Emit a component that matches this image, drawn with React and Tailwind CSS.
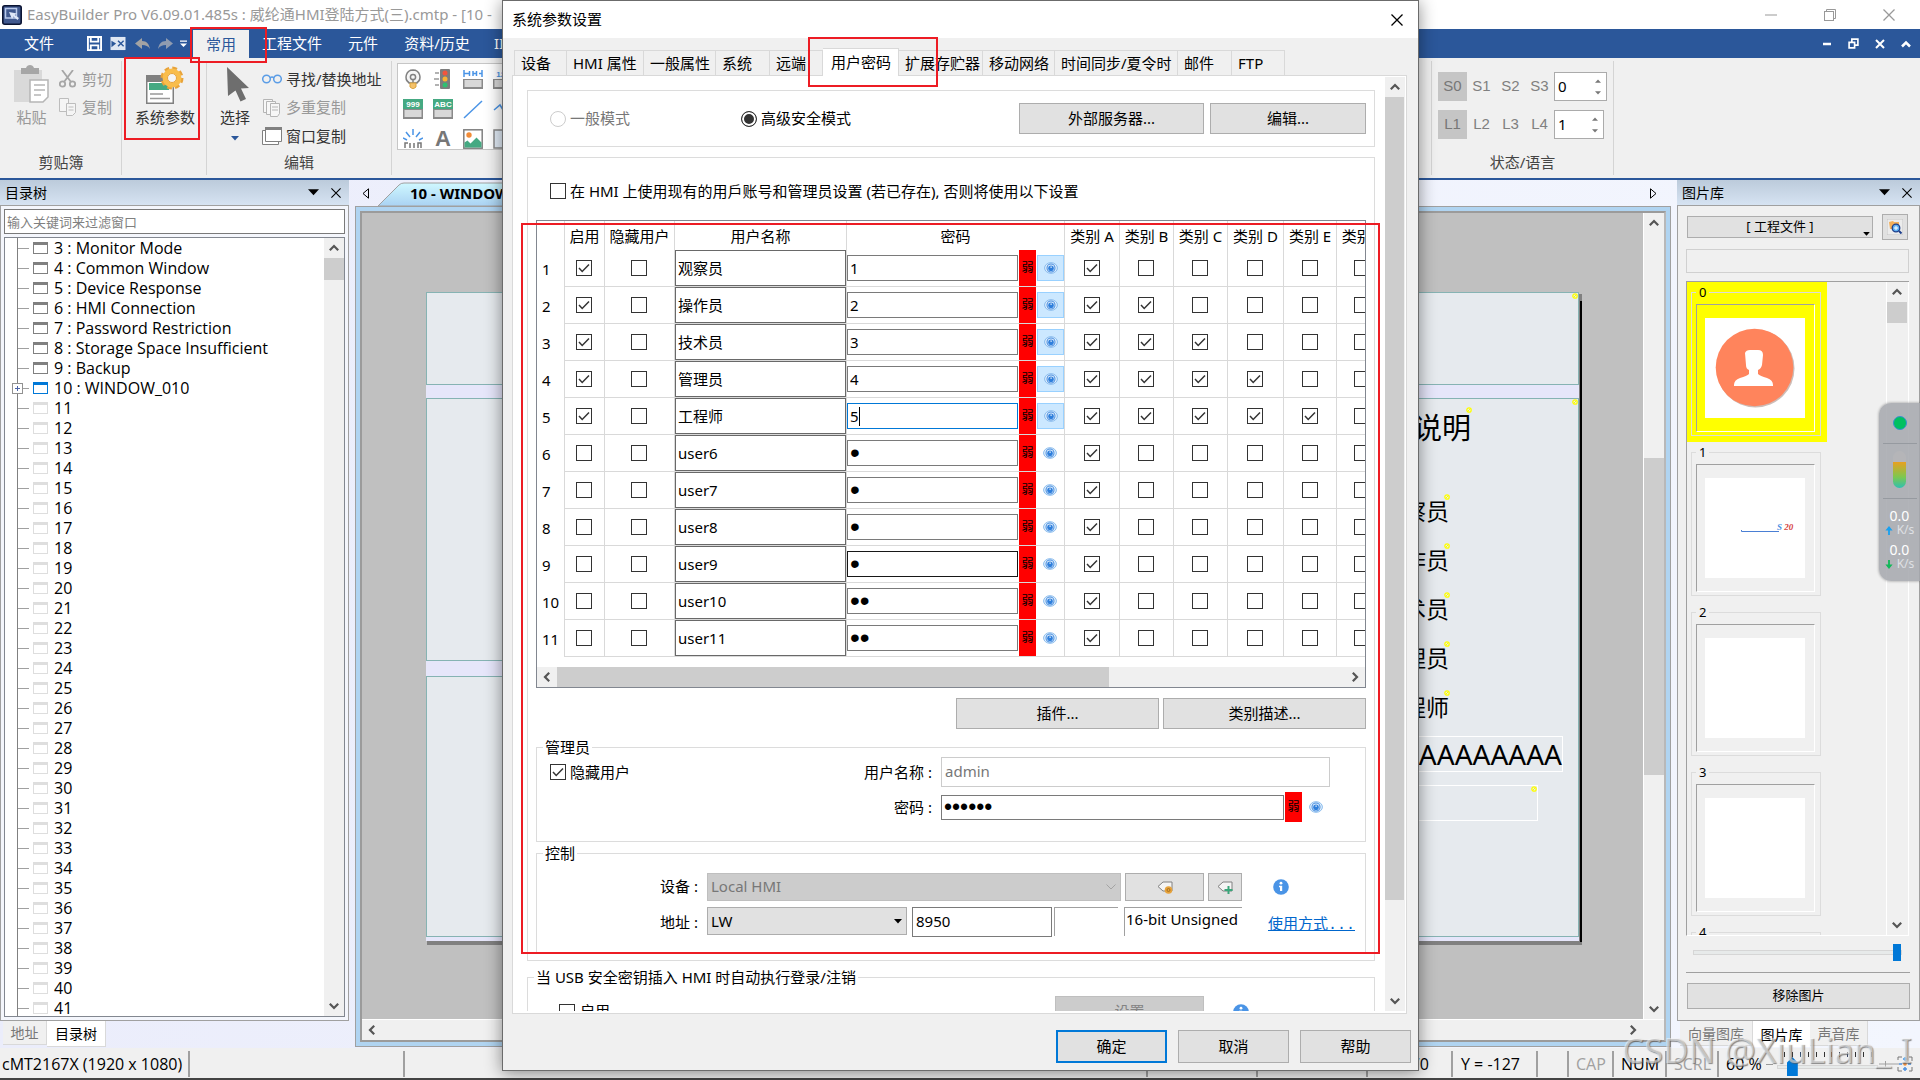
import React from 'react'
import clsx from 'clsx'

const users = [
  { name: '观察员', pass: '1', level: 1, shown: true },
  { name: '操作员', pass: '2', level: 2, shown: true },
  { name: '技术员', pass: '3', level: 3, shown: true },
  { name: '管理员', pass: '4', level: 4, shown: true },
  { name: '工程师', pass: '5', level: 5, shown: true },
  { name: 'user6', pass: '6', level: 1 },
  { name: 'user7', pass: '7', level: 1 },
  { name: 'user8', pass: '8', level: 1 },
  { name: 'user9', pass: '9', level: 1 },
  { name: 'user10', pass: '10', level: 1 },
  { name: 'user11', pass: '11', level: 1 },
]

const categories = ['A', 'B', 'C', 'D', 'E', 'F']

const dialogTabs = [
  { label: '设备', width: 'w-[53px]' },
  { label: 'HMI 属性', width: 'w-[77px]' },
  { label: '一般属性', width: 'w-[72px]' },
  { label: '系统', width: 'w-[54px]' },
  { label: '远端', width: 'w-[53px]' },
  { label: '用户密码', width: 'w-[76px]', active: true },
  { label: '扩展存贮器', width: 'w-[84px]' },
  { label: '移动网络', width: 'w-[72px]' },
  { label: '时间同步/夏令时', width: 'w-[123px]' },
  { label: '邮件', width: 'w-[54px]' },
  { label: 'FTP', width: 'w-[53px]' },
]

const windowNames = {
  3: 'Monitor Mode',
  4: 'Common Window',
  5: 'Device Response',
  6: 'HMI Connection',
  7: 'Password Restriction',
  8: 'Storage Space Insufficient',
  9: 'Backup',
  10: 'WINDOW_010',
}

const treeRows = Array.from({ length: 39 }, (_, i) => ({ id: i + 3, name: windowNames[i + 3] }))

const rotation = { up: '', right: 'rotate-90', down: 'rotate-180', left: '-rotate-90' }

function Arrow({ dir }) {
  return (
    <svg viewBox="0 0 10 10" className={clsx('w-[10px] h-[10px] shrink-0', rotation[dir])}>
      <path d="M0.8 7.2 5 3l4.200 4.200" fill="none" stroke="#555" strokeWidth="2.200" />
    </svg>
  )
}

function ScrollButton({ dir, className }) {
  return (
    <button aria-label={`scroll ${dir}`} className={clsx('flex items-center justify-center shrink-0 w-[20px] h-[20px]', className)}>
      <Arrow dir={dir} />
    </button>
  )
}

function Caret({ className }) {
  return (
    <svg viewBox="0 0 10 6" className={className}>
      <path d="M0 0h10L5 5.500z" fill="currentColor" />
    </svg>
  )
}

function Cross({ className, size = 10 }) {
  return (
    <svg viewBox="0 0 12 12" width={size} height={size} className={className}>
      <path d="M0.500 0.500l11 11M11.500 0.500l-11 11" fill="none" stroke="currentColor" strokeWidth="1.300" />
    </svg>
  )
}

function Check({ id, label, checked }) {
  return (
    <span className="relative inline-block w-[16px] h-[16px] shrink-0 align-middle">
      <input
        id={id}
        type="checkbox"
        aria-label={label}
        defaultChecked={checked}
        className="peer block w-[16px] h-[16px] appearance-none border border-[#333] bg-white"
      />
      <svg viewBox="0 0 16 16" className="absolute inset-0 hidden peer-checked:block pointer-events-none">
        <path d="M3 8l3.200 3.500L13 4.500" fill="none" stroke="#333" strokeWidth="1.500" />
      </svg>
    </span>
  )
}

function Eye() {
  return (
    <svg viewBox="0 0 14 12" className="w-[14px] h-[12px]">
      <ellipse cx="7" cy="6" rx="6.400" ry="5.300" fill="#e3f0fc" stroke="#7db3ea" strokeWidth="0.900" />
      <circle cx="7" cy="6" r="4" fill="none" stroke="#4a90e2" strokeWidth="1.100" />
      <circle cx="7" cy="6.300" r="2.800" fill="#2f7fdc" />
      <rect x="6.500" y="4.500" width="1.200" height="1.300" fill="#fff" />
    </svg>
  )
}

function Info() {
  return (
    <svg viewBox="0 0 16 16" className="w-[16px] h-[16px] shrink-0">
      <circle cx="8" cy="8" r="7.800" fill="#4a94e6" />
      <circle cx="8" cy="4.200" r="1.400" fill="#fff" />
      <path d="M6 6.800h3.200v5.200h-2.200v-3.700H6z" fill="#fff" />
    </svg>
  )
}

function Button({ children, className }) {
  return (
    <button className={clsx('flex items-center justify-center bg-[#e1e1e1] border border-[#adadad] shrink-0', className)}>
      {children}
    </button>
  )
}

function Weak({ className }) {
  return (
    <span className={clsx('flex items-center justify-center w-[17px] bg-[#ff0000] text-[12px] shrink-0', className)}>弱</span>
  )
}

/* ---------- title and menu bars ---------- */

function TitleBar() {
  return (
    <div className="flex items-center h-[29px] pl-[2px] bg-white text-[#999] shrink-0">
      <svg viewBox="0 0 20 20" className="w-[20px] h-[20px] mr-[5px] shrink-0">
        <rect x="0.800" y="0.800" width="18.400" height="18.400" rx="2" fill="#41598f" stroke="#0b1433" strokeWidth="1.600" />
        <rect x="3.500" y="3.500" width="11" height="9.500" fill="none" stroke="#b9c9ea" strokeWidth="1.500" />
        <path d="M7 7l3 7 1.500-2.500 4 3.500 1.500-2-4.200-3L15 8.500z" fill="#dfe7f7" />
      </svg>
      <span className="text-[15px] whitespace-nowrap flex-1">
        EasyBuilder Pro V6.09.01.485s : 威纶通HMI登陆方式(三).cmtp - [10 -
      </span>
      <button aria-label="Minimize" className="flex justify-center w-[58px]">
        <svg viewBox="0 0 12 12" className="w-[12px] h-[12px]"><path d="M0 6h12" stroke="currentColor" /></svg>
      </button>
      <button aria-label="Restore" className="flex justify-center w-[59px]">
        <svg viewBox="0 0 12 12" className="w-[12px] h-[12px]" fill="none" stroke="currentColor">
          <rect x="0.500" y="2.500" width="9" height="9" />
          <path d="M2.500 2.500v-2h9v9h-2" />
        </svg>
      </button>
      <button aria-label="Close" className="flex justify-center w-[59px] mr-[2px]"><Cross size={12} /></button>
    </div>
  )
}

function MenuBar() {
  return (
    <div className="flex items-stretch h-[29px] bg-[#2b579a] text-white text-[15px] shrink-0">
      <button className="w-[63px] pl-[15px]">文件</button>
      <div className="flex items-center w-[130px] pl-[24px]">
        <svg viewBox="0 0 16 16" className="w-[15px] h-[15px]" fill="none" stroke="#fff" strokeWidth="2">
          <path d="M1 1h14v14H1zM4 1v5h8V1M4 15v-5h8v5" />
        </svg>
        <svg viewBox="0 0 16 16" className="w-[16px] h-[15px] ml-[8px]">
          <path d="M0 1h16v14H0z" fill="#dfe7f3" />
          <path d="M1 5l5 3-5 4z" fill="#2b579a" />
          <path d="M8 5l6 6M14 5l-6 6" stroke="#2b579a" strokeWidth="1.500" />
        </svg>
        <svg viewBox="0 0 15 12" className="w-[15px] h-[12px] ml-[9px]">
          <path d="M7 0v3c5 0 7 3 8 8-2-3-4-4-8-4v4L0 5.500z" fill="#a3a3a3" />
        </svg>
        <svg viewBox="0 0 15 12" className="w-[15px] h-[12px] ml-[8px] -scale-x-100">
          <path d="M7 0v3c5 0 7 3 8 8-2-3-4-4-8-4v4L0 5.500z" fill="#8f9bb0" />
        </svg>
        <svg viewBox="0 0 8 8" className="w-[7px] h-[8px] ml-[7px]" fill="#fff">
          <path d="M0 0h8v1.500H0zM0 3.500h8L4 7.500z" />
        </svg>
      </div>
      <button className="w-[56px] mt-px bg-[#f0f0f0] text-[#2b579a]">常用</button>
      <button className="w-[86px] whitespace-nowrap">工程文件</button>
      <button className="w-[56px]">元件</button>
      <button className="w-[92px]">资料/历史</button>
      <button className="w-[56px] pl-[11px] text-left">IIoT</button>
      <div className="flex-1" />
      <div className="flex items-center gap-[16px] pr-[9px]">
        <svg viewBox="0 0 10 10" className="w-[10px] h-[10px]"><path d="M1 5h8" stroke="#fff" strokeWidth="2.500" /></svg>
        <svg viewBox="0 0 10 10" className="w-[11px] h-[11px]" fill="none" stroke="#fff" strokeWidth="1.500">
          <path d="M1 4h5v5H1zM3.500 4V1H9v5.500H6" />
        </svg>
        <svg viewBox="0 0 10 10" className="w-[10px] h-[10px]"><path d="M1 1l8 8M9 1L1 9" stroke="#fff" strokeWidth="2" /></svg>
        <svg viewBox="0 0 10 10" className="w-[10px] h-[10px]"><path d="M1 7.500l4-4 4 4" fill="none" stroke="#fff" strokeWidth="2.500" /></svg>
      </div>
    </div>
  )
}

/* ---------- ribbon ---------- */

function Lamp() {
  return (
    <svg viewBox="0 0 20 20" className="w-[20px] h-[20px]">
      <path d="M10 1a7 7 0 0 1 4 12.700V14H6v-.3A7 7 0 0 1 10 1z" fill="#f5f5f5" stroke="#808080" strokeWidth="1.500" />
      <circle cx="10" cy="8" r="2.600" fill="none" stroke="#808080" strokeWidth="1.500" />
      <path d="M10 10v4" stroke="#808080" strokeWidth="1.500" />
      <path d="M7 14h6v4l-3 2-3-2z" fill="#f5c26b" stroke="#d9a33d" />
    </svg>
  )
}

function TrafficLight() {
  return (
    <svg viewBox="0 0 20 20" className="w-[20px] h-[20px]">
      <rect x="7" y="0" width="10" height="20" rx="1" fill="#7d7d7d" />
      <circle cx="12" cy="4" r="2.500" fill="#f2553d" />
      <circle cx="12" cy="10" r="2.500" fill="#f9b233" />
      <circle cx="12" cy="16" r="2.500" fill="#2fbf71" />
      <path d="M2 4h4M1 10h5M2 16h4" stroke="#999" strokeWidth="1.500" />
    </svg>
  )
}

function PanelIcon({ top, text, plain }) {
  return (
    <svg viewBox="0 0 20 20" className="w-[20px] h-[20px]">
      {!plain && <rect width="20" height="11" fill={top} />}
      <rect x="0" y="10" width="20" height="10" fill="#8a8a8a" />
      <rect x="1.500" y="11" width="17" height="7" fill="#d8d8d8" />
      <text x="10" y="8" textAnchor="middle" fontSize="8" fontWeight="700" fill={plain ? '#4a94e6' : '#fff'} fontFamily="Liberation Sans">
        {text}
      </text>
    </svg>
  )
}

function ScaleIcon() {
  return (
    <svg viewBox="0 0 20 20" className="w-[20px] h-[20px]">
      <rect x="0" y="10" width="20" height="10" fill="#8a8a8a" />
      <rect x="1.500" y="11" width="17" height="7" fill="#d8d8d8" />
      <path d="M1 1v7M6.500 2v5M10 2v5M13.500 2v5M19 1v7M1 4.500h5.500M10 4.500h3.500M16 4.500h3" fill="none" stroke="#4a94e6" strokeWidth="1.500" />
    </svg>
  )
}

function Gallery() {
  return (
    <div className="grid grid-cols-[repeat(4,30px)] auto-rows-[30px] content-start overflow-hidden h-[87px] pl-[5px] pt-[5px] bg-white border border-[#c6c6c6]">
      <Lamp />
      <TrafficLight />
      <ScaleIcon />
      <PanelIcon plain text="123" />
      <PanelIcon top="#45a982" text="999" />
      <PanelIcon top="#45a982" text="ABC" />
      <svg viewBox="0 0 20 20" className="w-[20px] h-[20px]"><path d="M1 19L19 2" stroke="#4a94e6" strokeWidth="1.500" /></svg>
      <svg viewBox="0 0 20 20" className="w-[20px] h-[20px]"><path d="M1 11l6-5 5 8 6-9" fill="none" stroke="#4a94e6" strokeWidth="1.500" /></svg>
      <svg viewBox="0 0 20 20" className="w-[20px] h-[20px]">
        <path d="M10 0v6M3 3l4 5M17 3l-4 5M0 9l4 2M20 9l-4 2" stroke="#4a94e6" strokeWidth="1.500" />
        <path d="M2 19v-5h3M7 19v-5M11 19v-5M15 19v-5h3v5" fill="none" stroke="#777" strokeWidth="1.500" />
      </svg>
      <span className="w-[20px] text-center text-[22px] leading-[20px] text-[#777] font-['Liberation_Sans',sans-serif] font-bold">A</span>
      <svg viewBox="0 0 20 20" className="w-[20px] h-[20px]">
        <rect x="0.800" y="0.800" width="18.400" height="18.400" fill="#fff" stroke="#808080" strokeWidth="1.500" />
        <circle cx="6" cy="6" r="2.700" fill="#f28c38" />
        <path d="M1.500 18.500v-5l3-2 3 3 6-6 5 5v5z" fill="#45a982" />
      </svg>
      <svg viewBox="0 0 20 20" className="w-[20px] h-[20px]"><rect x="1" y="1" width="18" height="18" fill="#e3edf8" stroke="#888" strokeWidth="1.500" /></svg>
    </div>
  )
}

function RibbonGroup({ caption, className, children }) {
  return (
    <div className={clsx('flex flex-col shrink-0 mt-[3px] mb-[3px] border-r border-[#d4d4d4]', className)}>
      <div className="h-[89px]">{children}</div>
      <div className="text-center leading-[24px] text-[#444]">{caption}</div>
    </div>
  )
}

function StateRow({ labels, value, width }) {
  return (
    <div className="flex h-[29px]">
      {labels.map((l, i) => (
        <button key={l} className={clsx("w-[29px] text-[15px] font-['Liberation_Sans',sans-serif]", i === 0 ? 'bg-[#c5c5c5] text-[#777]' : 'text-[#808080]')}>
          {l}
        </button>
      ))}
      <div className={clsx('flex items-center bg-white border border-[#ababab] pr-[5px]', width)}>
        <input aria-label={`${labels[0]} value`} defaultValue={value} className="flex-1 min-w-0 pl-[3px] text-black" />
        <div className="flex flex-col gap-[8px] text-[#777]">
          <Caret className="w-[6px] h-[4px] rotate-180" />
          <Caret className="w-[6px] h-[4px]" />
        </div>
      </div>
    </div>
  )
}

function Ribbon() {
  return (
    <div className="flex h-[122px] bg-[#f0f0f0] border-b-2 border-[#2b579a] text-[15px] text-[#333] shrink-0">
      <RibbonGroup caption="剪贴簿" className="w-[122px] pl-px">
        <div className="flex pt-[4px]">
          <button className="flex flex-col items-center w-[58px] pl-[3px] text-[#999]">
            <svg viewBox="0 0 36 38" className="w-[36px] h-[38px]">
              <path d="M0 5h28v32H0z" fill="#d9d9d9" />
              <path d="M7 3h5c1-4 7-4 8 0h5v6H7z" fill="#a6a6a6" />
              <path d="M16 15h18v17l-5 5H16z" fill="#fff" stroke="#b5b5b5" strokeWidth="1.500" />
              <path d="M20 20h11M20 25h11M20 30h7" stroke="#b5b5b5" strokeWidth="1.500" />
            </svg>
            <span className="leading-[28px]">粘贴</span>
          </button>
          <div className="flex flex-col text-[#999]">
            <button className="flex items-center gap-[6px] h-[28px]">
              <svg viewBox="0 0 17 18" className="w-[17px] h-[18px]" fill="none" stroke="#a6a6a6" strokeWidth="1.800">
                <path d="M3 0l9 12M14 0L5 12" />
                <circle cx="3.500" cy="14" r="2.700" />
                <circle cx="13.500" cy="14" r="2.700" />
              </svg>
              剪切
            </button>
            <button className="flex items-center gap-[6px] h-[28px]">
              <svg viewBox="0 0 17 18" className="w-[17px] h-[18px]" fill="#f5f5f5" stroke="#bdbdbd">
                <path d="M0.500 0.500h9v13h-9z" />
                <path d="M7.500 5.500h9v9l-3 3h-6z" />
                <path d="M9.500 9h5M9.500 12h5" />
              </svg>
              复制
            </button>
          </div>
        </div>
      </RibbonGroup>
      <RibbonGroup caption="" className="w-[85px]">
        <button className="flex flex-col items-center w-full pt-[5px] pl-[2px]">
          <svg viewBox="0 0 38 38" className="w-[38px] h-[38px]">
            <rect x="0" y="9" width="28" height="29" fill="#808080" />
            <rect x="1.500" y="16" width="25" height="20.500" fill="#fff" />
            <rect x="3" y="17" width="20" height="7" fill="#45a982" />
            <path d="M4 28h13M4 32.500h20" stroke="#999" strokeWidth="1.500" />
            <circle cx="26" cy="12" r="9.500" fill="none" stroke="#e8a33a" strokeWidth="4" strokeDasharray="4.500 2.960" />
            <circle cx="26" cy="12" r="7" fill="#f2f2f2" stroke="#f9bd4b" strokeWidth="5" />
            <circle cx="26" cy="12" r="4.500" fill="#f5f5f5" stroke="#e8a33a" />
          </svg>
          <span className="leading-[26px]">系统参数</span>
        </button>
      </RibbonGroup>
      <RibbonGroup caption="编辑" className="w-[185px]">
        <div className="flex pt-[4px]">
          <button className="flex flex-col items-center w-[54px] ml-[1px]">
            <svg viewBox="0 0 23 36" className="w-[23px] h-[36px] mt-[2px] ml-[6px]">
              <path d="M0 0l22 21-8 .5 5 10.500-5.500 2.500-5-11L1 29z" fill="#6e6e6e" />
            </svg>
            <span className="leading-[28px]">选择</span>
            <Caret className="w-[8px] h-[5px] mt-[5px] text-[#2b579a]" />
          </button>
          <div className="flex flex-col">
            <button className="flex items-center gap-[4px] h-[28px]">
              <svg viewBox="0 0 20 18" className="w-[20px] h-[18px]" fill="none" stroke="#5b9de6" strokeWidth="1.500">
                <circle cx="4.500" cy="9" r="3.800" />
                <circle cx="15.500" cy="9" r="3.800" />
                <path d="M8 8q2-2 4 0" />
              </svg>
              寻找/替换地址
            </button>
            <button className="flex items-center gap-[4px] h-[29px] text-[#999]">
              <svg viewBox="0 0 20 18" className="w-[20px] h-[18px]" fill="#f7f7f7" stroke="#b5b5b5">
                <path d="M1.500 0.500h9v13h-9z" />
                <path d="M4.500 2.500h9v13h-9z" />
                <path d="M8.500 4.500h9v10l-2 3h-7zM10 8h6M10 11h6" />
              </svg>
              多重复制
            </button>
            <button className="flex items-center gap-[4px] h-[28px]">
              <svg viewBox="0 0 20 18" className="w-[20px] h-[18px]" fill="#fff" stroke="#808080">
                <path d="M0.500 3.500h16v14h-16z" />
                <path d="M3.500 1.500h16v13h-16z" />
                <path d="M3 1.500h17" strokeWidth="3" />
              </svg>
              窗口复制
            </button>
          </div>
        </div>
      </RibbonGroup>
      <div className="flex-1 min-w-0 mt-[3px] mb-[3px] pl-[5px] pr-[30px] pt-[2px] border-r border-[#d4d4d4]">
        <Gallery />
      </div>
      <RibbonGroup caption="状态/语言" className="w-[182px]">
        <div className="flex flex-col gap-[9px] pl-[6px] pt-[11px]">
          <StateRow labels={['S0', 'S1', 'S2', 'S3']} value="0" width="w-[53px]" />
          <StateRow labels={['L1', 'L2', 'L3', 'L4']} value="1" width="w-[50px]" />
        </div>
      </RibbonGroup>
      <div className="w-[306px] shrink-0" />
    </div>
  )
}

/* ---------- docks ---------- */

function DockHeader({ title }) {
  return (
    <div className="flex items-center h-[25px] pl-[5px] pr-[8px] bg-linear-to-b from-[#bccbdb] to-[#d6e3f2] text-[14px] shrink-0">
      <span className="flex-1">{title}</span>
      <button aria-label="Menu"><Caret className="w-[11px] h-[7px] mr-[12px]" /></button>
      <button aria-label="Close panel"><Cross size={10} /></button>
    </div>
  )
}

function WindowTree() {
  return (
    <aside className="flex flex-col w-[349px] shrink-0">
      <DockHeader title="目录树" />
      <div className="flex flex-col flex-1 min-h-0 gap-[3px] p-[3px] border border-[#a0a0a0] bg-[#f4f6fc]">
        <input
          aria-label="filter"
          placeholder="输入关键词来过滤窗口"
          className="w-full h-[25px] px-[2px] bg-white border border-[#7a7a7a] text-[13px] placeholder:text-[#808080] shrink-0"
        />
        <div className="flex flex-1 min-h-0 bg-white border border-[#828790]">
          <ul className="flex-1 overflow-hidden pl-[12px] text-[16px] font-['Open_Sans',sans-serif]">
            {treeRows.map((row) => (
              <li key={row.id} className="relative flex items-center h-[20px] border-l border-[#808080] whitespace-nowrap">
                <span className="w-[11px] h-px bg-[#a0a0a0] mr-[4px] shrink-0" />
                {row.id === 10 && (
                  <span className="absolute -left-[6px] w-[11px] h-[11px] bg-white border border-[#919191]">
                    <svg viewBox="0 0 9 9" className="w-[9px] h-[9px]"><path d="M2 4.500h5M4.500 2v5" stroke="#4b63a7" /></svg>
                  </span>
                )}
                <span
                  className={clsx(
                    'w-[15px] h-[12px] border border-t-[3px] mr-[6px] shrink-0',
                    row.id < 10 ? 'border-[#808080]' : row.id === 10 ? 'border-[#0078d7]' : 'border-[#dedede]'
                  )}
                />
                {row.name ? `${row.id} : ${row.name}` : row.id}
              </li>
            ))}
          </ul>
          <div className="flex flex-col w-[20px] bg-[#f0f0f0]">
            <ScrollButton dir="up" />
            <div className="h-[22px] bg-[#cdcdcd]" />
            <div className="flex-1" />
            <ScrollButton dir="down" />
          </div>
        </div>
      </div>
      <div className="flex items-start h-[27px] pl-[3px] text-[14px] shrink-0">
        <button className="w-[44px] h-[24px] bg-[#f0f0f0] border-b border-r border-[#d9d9d9] text-[#777]">地址</button>
        <button className="w-[59px] h-[26px] bg-white border-b border-r border-[#d9d9d9]">目录树</button>
      </div>
    </aside>
  )
}

function Marker({ className }) {
  return (
    <svg viewBox="0 0 6 6" className={clsx('absolute w-[6px] h-[6px]', className)}>
      <circle cx="3" cy="3" r="2.200" fill="none" stroke="#ff0" strokeWidth="1.300" />
      <path d="M2 4l2-2" stroke="#ff0" />
    </svg>
  )
}

function HmiPage() {
  return (
    <div className="absolute left-[64px] right-[64px] top-[79px] bottom-[78px] bg-[#e6e6fa] border-t border-[#86b3b3] shadow-[2px_3px_0_1px_#808080]">
      <div className="absolute inset-x-0 top-0 h-[92px] bg-[#e6eaee] border border-t-0 border-[#86b3b3]"><Marker className="right-0 top-0" /></div>
      <div className="absolute left-0 w-1/2 top-[105px] h-[263px] bg-[#e6eaee] border border-[#86b3b3]" />
      <div className="absolute left-0 w-1/2 top-[383px] bottom-[4px] bg-[#e6eaee] border border-[#86b3b3]" />
      <div className="absolute left-1/2 right-0 top-[105px] bottom-[4px] bg-[#e6eaee] border border-[#86b3b3]">
        <Marker className="right-0 top-0" />
        <div className="absolute right-[107px] top-[8px] text-[29px] leading-[42px]">
          说明<Marker className="-right-px top-0" />
        </div>
        {users.slice(0, 5).map((u, i) => (
          <div key={u.name} className="absolute right-[129px] text-[23px] leading-[34px]" style={{ top: 95 + i * 49 }}>
            {u.name}<Marker className="-right-px top-0" />
          </div>
        ))}
        <div className="absolute right-[15px] top-[337px] w-[300px] h-[36px] border border-white text-right text-[28px] leading-[34px]">
          AAAAAAAAA
        </div>
        <div className="absolute right-[40px] top-[386px] w-[300px] h-[36px] border border-white"><Marker className="right-0 top-0" /></div>
      </div>
      <div className="absolute -right-[3px] top-[8px] -bottom-px w-[2px] bg-black" />
    </div>
  )
}

function Editor() {
  return (
    <main className="flex flex-col flex-1 min-w-0 pb-[1px]">
      <div className="flex items-center h-[26px] pl-[13px] pr-[20px] shrink-0">
        <svg viewBox="0 0 7 11" className="w-[7px] h-[11px]"><path d="M6.500 0.800v9.400L1 5.500z" fill="none" stroke="#000" /></svg>
        <div className="relative flex items-center h-full ml-[9px] w-[300px]">
          <svg viewBox="0 0 300 26" className="absolute inset-0 w-[300px] h-[26px]">
            <defs>
              <linearGradient id="tabFill" x1="0" y1="0" x2="0" y2="1">
                <stop offset="0" stopColor="#cff8ff" />
                <stop offset="1" stopColor="#aad2f3" />
              </linearGradient>
            </defs>
            <path d="M0 26L21 5q2-2 5-2h274v23z" fill="url(#tabFill)" stroke="#a0a0a0" />
          </svg>
          <span className="relative pl-[32px] text-[15px] font-bold">10 - WINDOW_010</span>
        </div>
        <div className="flex-1" />
        <svg viewBox="0 0 7 11" className="w-[7px] h-[11px]"><path d="M0.500 0.800v9.400L6 5.500z" fill="none" stroke="#000" /></svg>
      </div>
      <div className="flex flex-1 min-h-0 mx-[6px] border border-[#a0a0a0] bg-[#b0d4f1] p-[4px]">
        <div className="flex flex-col flex-1 min-w-0 border-2 border-[#9b9b9b] border-r-[#b8b8b8]">
          <div className="flex flex-1 min-h-0">
            <div className="relative flex-1 min-w-0 overflow-hidden bg-[#c0c0c0]">
              <HmiPage />
            </div>
            <div className="flex flex-col w-[21px] bg-[#f0f0f0] border-l border-white">
              <ScrollButton dir="up" />
              <div className="flex-[226_1_0]" />
              <div className="flex-[317_1_0] bg-[#cdcdcd]" />
              <div className="flex-[225_1_0]" />
              <ScrollButton dir="down" />
            </div>
          </div>
          <div className="flex items-center justify-between h-[21px] pr-[21px] bg-[#f0f0f0] border-t border-white shrink-0">
            <ScrollButton dir="left" />
            <ScrollButton dir="right" />
          </div>
        </div>
      </div>
    </main>
  )
}

function Thumb({ index }) {
  return (
    <div className={clsx('w-[140px] h-[160px] pl-[4px] shrink-0', index === 0 && 'bg-[#ff0]')}>
      <fieldset className="w-[130px] h-[154px] border border-[#dcdcdc] pl-[4px]">
        <legend className="px-[3px] text-[13px] leading-[20px]">{index}</legend>
        <div className="flex w-[119px] h-[128px] mt-[2px] p-[8px] pt-[13px] border border-t-[#a0a0a0] border-l-[#a0a0a0] border-b-white border-r-white">
          <div className="w-[100px] h-[100px] bg-white">
            {index === 0 && (
              <svg viewBox="0 0 100 100" className="w-[100px] h-[100px]">
                <circle cx="50.500" cy="50.500" r="39" fill="#cdbdb8" />
                <circle cx="49.500" cy="49.500" r="38.800" fill="#ff845c" />
                <path d="M40 35q1-3 5-3h8q5 0 5 5l-1 10q-1 4-4 5v4q2 2 9 4 6 2 6 7v1H29v-1q0-5 6-7 7-2 9-4v-4q-3-1-3-5z" fill="#fff" />
              </svg>
            )}
            {index === 1 && (
              <svg viewBox="0 0 100 100" className="w-[100px] h-[100px]">
                <path d="M36.500 52v1.500H74" fill="none" stroke="#4a7fd4" />
                <text x="72" y="52" fontSize="9" fontStyle="italic" fontWeight="700" fontFamily="Liberation Serif" fill="#d64541">
                  <tspan fill="#4a90e2">S</tspan> 20
                </text>
              </svg>
            )}
          </div>
        </div>
      </fieldset>
    </div>
  )
}

function PictureLibrary() {
  return (
    <aside className="flex flex-col w-[243px] shrink-0">
      <DockHeader title="图片库" />
      <div className="flex flex-col flex-1 min-h-0 pt-[8px] pl-[8px] pr-[9px] pb-[11px] border border-[#a0a0a0] bg-[#f0f0f0]">
        <div className="flex items-center justify-between h-[26px] pl-px shrink-0">
          <div className="relative">
            <select aria-label="library" className="block w-[186px] h-[22px] appearance-none bg-[#e1e1e1] border border-[#adadad] text-[13px] [text-align-last:center]">
              <option>[ 工程文件 ]</option>
            </select>
            <Caret className="absolute right-[3px] bottom-[2px] w-[7px] h-[4px] pointer-events-none" />
          </div>
          <Button className="w-[26px] h-[26px] mr-[2px]">
            <svg viewBox="0 0 16 16" className="w-[16px] h-[16px]">
              <rect width="16" height="16" fill="#ececec" stroke="#c5c5c5" />
              <path d="M2 3l4-1 1 1h5v7H3z" fill="#f3b05a" />
              <circle cx="9" cy="9" r="3.800" fill="#5fb2f5" stroke="#1e3f8c" strokeWidth="1.300" />
              <path d="M7 9h4M9 7v4" stroke="#fff" />
              <path d="M12 12l2.500 2.500" stroke="#1e3f8c" strokeWidth="2" />
            </svg>
          </Button>
        </div>
        <div className="h-[24px] mt-[9px] mr-px border border-[#d0d0d0] shrink-0" />
        <div className="flex flex-1 min-h-0 mt-[8px] mr-px border-t border-l border-[#a0a0a0] border-b border-b-white">
          <div className="flex-1 overflow-hidden">
            {[0, 1, 2, 3, 4].map((i) => <Thumb key={i} index={i} />)}
          </div>
          <div className="flex flex-col w-[23px] pr-px border-x border-white">
            <ScrollButton dir="up" />
            <div className="h-[21px] bg-[#cdcdcd]" />
            <div className="flex-1" />
            <ScrollButton dir="down" />
          </div>
        </div>
        <input
          type="range"
          aria-label="zoom"
          defaultValue="100"
          className="h-[17px] mt-[8px] ml-[7px] mr-[8px] appearance-none bg-transparent shrink-0 [&::-webkit-slider-runnable-track]:h-[5px] [&::-webkit-slider-runnable-track]:bg-[#e7eaea] [&::-webkit-slider-runnable-track]:border [&::-webkit-slider-runnable-track]:border-[#d6d6d6] [&::-webkit-slider-thumb]:appearance-none [&::-webkit-slider-thumb]:w-[8px] [&::-webkit-slider-thumb]:h-[17px] [&::-webkit-slider-thumb]:-mt-[7px] [&::-webkit-slider-thumb]:bg-[#0078d7]"
        />
        <div className="h-px mt-[11px] bg-[#a0a0a0] shrink-0" />
        <Button className="h-[26px] mt-[10px] ml-px text-[13px]">移除图片</Button>
      </div>
      <div className="flex items-start h-[27px] pl-[3px] text-[14px] shrink-0">
        <button className="w-[73px] h-[25px] bg-[#f0f0f0] border-r border-b border-[#d9d9d9] text-[#777]">向量图库</button>
        <button className="w-[57px] h-[26px] bg-white">图片库</button>
        <button className="w-[58px] h-[25px] bg-[#f0f0f0] border-r border-b border-[#d9d9d9] text-[#777]">声音库</button>
      </div>
    </aside>
  )
}

/* ---------- dialog ---------- */

function UserTable() {
  const head = 'font-normal border-r border-[#d9d9d9] h-[29px] p-0 pt-[2px] overflow-hidden whitespace-nowrap'
  const cell = 'p-0 border-r border-b border-[#d9d9d9] text-center leading-none'
  return (
    <div className="border border-[#828790]">
      <div className="overflow-hidden">
        <table className="table-fixed w-[852px] border-separate border-spacing-0">
          <colgroup>
            <col className="w-[28px]" /><col className="w-[40px]" /><col className="w-[70px]" /><col className="w-[172px]" /><col className="w-[218px]" />
            <col className="w-[55px]" /><col className="w-[54px]" /><col className="w-[54px]" /><col className="w-[56px]" /><col className="w-[53px]" /><col className="w-[52px]" />
          </colgroup>
          <thead>
            <tr>
              <th className={head} />
              <th className={head}>启用</th>
              <th className={head}>隐藏用户</th>
              <th className={head}>用户名称</th>
              <th className={head}>密码</th>
              {categories.map((c) => <th key={c} className={head}>类别 {c}</th>)}
            </tr>
          </thead>
          <tbody>
            {users.map((u, i) => (
              <tr key={u.name} className="h-[37px]">
                <th className="font-normal text-left pl-[5px] pt-[2px] pb-0 pr-0 border-r border-[#d9d9d9]">{i + 1}</th>
                <td className={clsx(cell, 'pr-px')}><Check label={`启用 ${u.name}`} checked={u.shown} /></td>
                <td className={clsx(cell, 'pr-px')}><Check label={`隐藏用户 ${u.name}`} /></td>
                <td className={cell}>
                  <input aria-label={`用户名称 ${i + 1}`} defaultValue={u.name} className="block w-full h-[36px] pl-[2px] pb-px border border-[#696969]" />
                </td>
                <td className={cell}>
                  <div className="flex items-center h-[36px]">
                    <div className="relative flex-1">
                      <input
                        type={u.shown ? 'text' : 'password'}
                        aria-label={`密码 ${i + 1}`}
                        defaultValue={u.pass}
                        className={clsx(
                          'block w-full h-[26px] pl-[2px] border',
                          i === 4 ? 'border-[#0078d7]' : i === 8 ? 'border-[#171717]' : 'border-[#7a7a7a]',
                          !u.shown && "text-[28px] font-['Liberation_Sans',sans-serif]"
                        )}
                      />
                      {i === 4 && <span className="absolute left-[12px] top-[4px] w-px h-[19px] bg-black" />}
                    </div>
                    <Weak className="h-[36px] ml-[1px]" />
                    <button
                      aria-label={`显示密码 ${i + 1}`}
                      className={clsx('flex items-center justify-center w-[27px] h-[26px] ml-[1px] border', u.shown ? 'bg-[#cce8ff] border-[#99d1ff]' : 'pr-px border-transparent')}
                    >
                      <Eye />
                    </button>
                  </div>
                </td>
                {categories.map((c, k) => (
                  <td key={c} className={clsx(cell, 'pr-px')}><Check label={`类别 ${c} ${u.name}`} checked={k < u.level} /></td>
                ))}
              </tr>
            ))}
          </tbody>
        </table>
      </div>
      <div className="flex h-[20px] mt-[10px] bg-[#f0f0f0]">
        <ScrollButton dir="left" />
        <div className="w-[552px] bg-[#cdcdcd]" />
        <ScrollButton dir="right" className="ml-auto" />
      </div>
    </div>
  )
}

function AdminGroup() {
  return (
    <fieldset className="h-[105px] mt-[8px] border border-[#dcdcdc]">
      <legend className="ml-[6px] px-[2px] leading-[20px]">管理员</legend>
      <div className="grid grid-cols-[1fr_auto_389px] gap-x-[9px] gap-y-[5px] items-center pl-[13px] pr-[35px]">
        <label htmlFor="hideAdmin" className="flex items-center gap-[4px]"><Check id="hideAdmin" checked />隐藏用户</label>
        <label htmlFor="adminName" className="text-right">用户名称 :</label>
        <input id="adminName" disabled defaultValue="admin" className="h-[30px] pl-[3px] pb-[3px] border border-[#ccc] text-[#777] bg-white" />
        <span />
        <label htmlFor="adminPass" className="text-right">密码 :</label>
        <div className="flex items-center h-[30px]">
          <input id="adminPass" type="password" defaultValue="111111" className="w-[343px] h-[25px] pl-[2px] border border-[#7a7a7a] text-[23px] font-['Liberation_Sans',sans-serif] shrink-0" />
          <Weak className="h-[30px] ml-[1px]" />
          <button aria-label="显示密码" className="ml-[7px]"><Eye /></button>
        </div>
      </div>
    </fieldset>
  )
}

function Tag({ children }) {
  return (
    <svg viewBox="0 0 16 16" className="w-[16px] h-[16px]">
      <path d="M15 12V3H6L1 7.500 6 12z" fill="#f4f4f4" stroke="#808080" />
      {children}
    </svg>
  )
}

function ControlGroup() {
  return (
    <fieldset className="h-[111px] mt-[1px] border border-[#dcdcdc]">
      <legend className="ml-[6px] px-[2px] leading-[20px]">控制</legend>
      <div className="flex items-center h-[29px] mt-[9px]">
        <label htmlFor="device" className="w-[161px] text-right mr-[9px]">设备 :</label>
        <div className="relative">
          <select id="device" disabled className="block w-[414px] h-[28px] pl-[3px] appearance-none bg-[#ccc] border border-[#bfbfbf] text-[#777] opacity-100">
            <option>Local HMI</option>
          </select>
          <svg viewBox="0 0 10 6" className="absolute right-[5px] top-[11px] w-[10px] h-[6px] pointer-events-none">
            <path d="M0.500 0.500L5 5l4.500-4.500" fill="none" stroke="#a3a3a3" />
          </svg>
        </div>
        <Button className="w-[79px] h-[28px] ml-[4px]">
          <Tag><circle cx="11.500" cy="11" r="3.800" fill="#e6a23c" /><circle cx="11.500" cy="11" r="1.500" fill="none" stroke="#a9711c" /></Tag>
        </Button>
        <Button className="w-[34px] h-[28px] ml-[4px]">
          <Tag><path d="M11.500 7v8M7.500 11h8" stroke="#3aa67a" strokeWidth="2" /></Tag>
        </Button>
        <span className="ml-[31px]"><Info /></span>
      </div>
      <div className="flex items-start h-[30px] mt-[6px]">
        <label htmlFor="address" className="w-[161px] leading-[30px] text-right mr-[9px]">地址 :</label>
        <div className="relative">
          <select id="address" className="block w-[200px] h-[28px] pl-[3px] appearance-none bg-[#e1e1e1] border border-[#adadad]">
            <option>LW</option>
          </select>
          <Caret className="absolute right-[5px] top-[12px] w-[8px] h-[5px] pointer-events-none" />
        </div>
        <input aria-label="地址值" defaultValue="8950" className="w-[140px] h-[30px] ml-[5px] pl-[3px] pb-[3px] border border-[#7a7a7a]" />
        <div className="w-[64px] h-[29px] ml-[2px] border-t border-l border-[#a0a0a0]" />
        <div className="w-[118px] h-[29px] ml-[6px] pl-px border-t border-l border-[#a0a0a0] leading-[22px] whitespace-nowrap">16-bit Unsigned</div>
        <a href="#usage" className="ml-[26px] leading-[38px] text-[#0066cc] underline font-['Liberation_Mono','Noto_Sans_CJK_SC',monospace]">使用方式...</a>
      </div>
    </fieldset>
  )
}

function SettingsDialog() {
  return (
    <div className="absolute inset-0 flex justify-center pl-px pb-[9px] pointer-events-none">
      <div
        role="dialog"
        aria-label="系统参数设置"
        className="relative flex flex-col w-[917px] text-[15px] bg-[#f0f0f0] border border-[#6b6b6b] shadow-[0_2px_16px_rgba(0,0,0,0.45)] pointer-events-auto"
      >
        <div className="flex items-center h-[37px] pl-[9px] pr-[15px] bg-white shrink-0">
          <span className="flex-1">系统参数设置</span>
          <button aria-label="关闭"><Cross size={12} /></button>
        </div>
        <div role="tablist" className="relative z-10 flex items-end h-[28px] mt-[10px] -mb-px pl-[11px] shrink-0">
          {dialogTabs.map((t) => (
            <button
              key={t.label}
              role="tab"
              aria-selected={!!t.active}
              className={clsx(
                'text-left whitespace-nowrap border-t border-r border-[#d9d9d9] first:border-l shrink-0',
                t.active ? 'h-[28px] pl-[8px] bg-white' : 'h-[26px] pl-[6px] border-b',
                t.width
              )}
            >
              {t.label}
            </button>
          ))}
        </div>
        <div className="flex flex-1 min-h-0 ml-[9px] mr-[11px] pb-[2px] bg-white border border-[#d9d9d9]">
          <div className="flex-1 min-w-0 overflow-hidden pl-[14px] pr-[10px] pt-[14px]">
            <div className="flex items-center h-[57px] pl-[22px] pr-[8px] border border-[#dcdcdc]">
              <label className="flex items-center gap-[4px] w-[191px] text-[#777]">
                <input type="radio" name="mode" disabled className="w-[16px] h-[16px] appearance-none rounded-full border border-[#ccc]" />
                一般模式
              </label>
              <label className="flex items-center gap-[4px] flex-1">
                <input type="radio" name="mode" defaultChecked className="w-[16px] h-[16px] appearance-none rounded-full border border-[#333] bg-[#333] shadow-[inset_0_0_0_2px_#fff]" />
                高级安全模式
              </label>
              <Button className="w-[185px] h-[31px] mr-[6px]">外部服务器...</Button>
              <Button className="w-[156px] h-[31px]">编辑...</Button>
            </div>

            <div className="mt-[10px] pt-[16px] px-[8px] pb-[6px] border border-[#dcdcdc]">
              <label htmlFor="useExisting" className="flex items-center gap-[4px] h-[34px] mb-[12px] pl-[14px] whitespace-nowrap">
                <Check id="useExisting" />在 HMI 上使用现有的用戶账号和管理员设置 (若已存在), 否则将使用以下设置
              </label>
              <UserTable />
              <div className="flex justify-end gap-[4px] mt-[10px]">
                <Button className="w-[203px] h-[31px]">插件...</Button>
                <Button className="w-[203px] h-[31px]">类别描述...</Button>
              </div>
              <AdminGroup />
              <ControlGroup />
            </div>

            <fieldset className="h-[100px] mt-[6px] border border-[#dcdcdc]">
              <legend className="ml-[6px] px-[2px] leading-[20px]">当 USB 安全密钥插入 HMI 时自动执行登录/注销</legend>
              <div className="flex items-center h-[31px] mt-[9px] pl-[31px]">
                <label htmlFor="usb" className="flex items-center gap-[5px] flex-1"><Check id="usb" />启用</label>
                <button disabled className="w-[149px] h-[31px] mr-[29px] bg-[#ccc] border border-[#bfbfbf] text-[#838383]">设置</button>
                <span className="mr-[125px]"><Info /></span>
              </div>
            </fieldset>
          </div>
          <div className="flex flex-col w-[20px] mt-px mr-px bg-[#f0f0f0] shrink-0">
            <ScrollButton dir="up" />
            <div className="flex-[802_1_0] mr-px bg-[#cdcdcd]" />
            <div className="flex-[91_1_0]" />
            <ScrollButton dir="down" />
          </div>
        </div>
        <div className="flex justify-end gap-[11px] pt-[16px] pb-[7px] pr-[7px] shrink-0">
          <button className="w-[111px] h-[33px] bg-[#e1e1e1] border-2 border-[#0078d7]">确定</button>
          <Button className="w-[111px] h-[33px]">取消</Button>
          <Button className="w-[111px] h-[33px]">帮助</Button>
        </div>
        <div className="absolute left-[305px] top-[36px] w-[130px] h-[50px] z-20 border-2 border-[#ed1c24] pointer-events-none" />
        <div className="absolute left-[18px] top-[222px] w-[859px] h-[731px] z-20 border-2 border-[#ed1c24] pointer-events-none" />
      </div>
    </div>
  )
}

/* ---------- status bar and overlays ---------- */

function StatusCell({ className, children }) {
  return <div className={clsx('flex items-center h-[26px] border-r-2 border-[#a0a0a0] shrink-0 whitespace-nowrap', className)}>{children}</div>
}

function StatusBar() {
  return (
    <footer className="flex items-center h-[32px] pt-[2px] bg-[#f0f0f0] border-b-2 border-[#444] text-[16px] font-['Open_Sans',sans-serif] shrink-0">
      <StatusCell className="w-[190px] pl-[2px]">cMT2167X (1920 x 1080)</StatusCell>
      <StatusCell className="w-[215px]" />
      <StatusCell className="flex-1" />
      <StatusCell className="w-[110px]" />
      <StatusCell className="w-[110px]" />
      <StatusCell className="w-[85px] justify-end pr-[22px]">X = 370</StatusCell>
      <StatusCell className="w-[85px] pl-[8px]">Y = -127</StatusCell>
      <StatusCell className="w-[31px]" />
      <StatusCell className="w-[45px] pl-[7px] text-[#a0a0a0]">CAP</StatusCell>
      <StatusCell className="w-[53px] pl-[7px]">NUM</StatusCell>
      <StatusCell className="w-[52px] pl-[7px] text-[#a0a0a0]">SCRL</StatusCell>
      <span className="w-[47px] pl-[7px] whitespace-nowrap">60 %</span>
      <span className="w-[7px] h-px bg-[#999]" />
      <div className="relative w-[101px] h-[26px] ml-[4px]">
        <svg viewBox="0 0 101 26" className="absolute inset-0 w-[101px] h-[26px]">
          <path d="M7.500 1v5M15.500 1v5M23.500 1v5M31.500 1v5M39.500 1v5M47.500 1v5M54.500 1v5M62.500 1v5M70.500 1v5M78.500 1v5M86.500 1v5M94.500 1v5" stroke="#333" />
        </svg>
        <input
          type="range"
          aria-label="page zoom"
          defaultValue="10"
          className="absolute inset-x-0 bottom-0 w-full h-[20px] appearance-none bg-transparent [&::-webkit-slider-runnable-track]:h-[4px] [&::-webkit-slider-runnable-track]:bg-[#e7eaea] [&::-webkit-slider-runnable-track]:border [&::-webkit-slider-runnable-track]:border-[#d6d6d6] [&::-webkit-slider-thumb]:appearance-none [&::-webkit-slider-thumb]:w-[11px] [&::-webkit-slider-thumb]:h-[19px] [&::-webkit-slider-thumb]:-mt-[9px] [&::-webkit-slider-thumb]:bg-[#0078d7] [&::-webkit-slider-thumb]:[clip-path:polygon(50%_0,100%_30%,100%_100%,0_100%,0_30%)]"
        />
      </div>
      <svg viewBox="0 0 34 16" className="w-[34px] h-[16px] ml-px mr-[7px] shrink-0">
        <path d="M0 8h20M6.500 5v6" stroke="#a0a0a0" />
        <path d="M19 4V1h4M30 1h3v4M33 11v4h-3M23 15h-4v-4" fill="none" stroke="#777" />
        <circle cx="26" cy="8" r="1.800" fill="#f28c38" />
        <path d="M26 1v4M26 11v4M20 8h3M29 8h3M24 3h4M24 13h4" stroke="#4a90e2" strokeWidth="1.500" />
      </svg>
    </footer>
  )
}

function SpeedLine({ dir, color }) {
  return (
    <div className="flex flex-col items-center w-full">
      <span className="text-[14px] leading-[16px] text-white">0.0</span>
      <span className="flex items-center gap-[4px] text-[12px] leading-[12px] text-[#dfe0e4]">
        <svg viewBox="0 0 8 10" className={clsx('w-[8px] h-[9px]', dir === 'down' && 'rotate-180')}>
          <path d="M4 0l4 5H5v5H3V5H0z" fill={color} />
        </svg>
        K/s
      </span>
    </div>
  )
}

function NetMonitor() {
  return (
    <div className="absolute right-0 top-[403px] flex flex-col items-center w-[41px] h-[178px] pt-[13px] rounded-l-[12px] bg-[#a5a7ad]/85 shadow-[0_0_3px_rgba(0,0,0,0.4)]">
      <span className="w-[14px] h-[14px] rounded-full bg-[#00c060] border border-[#3a8fd0]" />
      <span className="w-[34px] h-px mt-[13px] bg-[#969aa0]" />
      <span className="w-[13px] h-[37px] mt-[7px] rounded-full bg-[linear-gradient(to_bottom,#b5b5b8_0_11px,#e8a020_11px,#7dc850_26px,#2fc0b0)]" />
      <span className="w-[34px] h-px mt-[10px] mb-[9px] bg-[#969aa0]" />
      <SpeedLine dir="up" color="#18a0f0" />
      <span className="h-[6px]" />
      <SpeedLine dir="down" color="#10b858" />
    </div>
  )
}

export default function App() {
  return (
    <div className="relative flex flex-col h-screen overflow-hidden text-black font-['Noto_Sans','Noto_Sans_CJK_SC',sans-serif]">
      <TitleBar />
      <MenuBar />
      <Ribbon />
      <div className="flex flex-1 min-h-0 bg-linear-to-r from-[#ebedfb] to-[#f3f6fe]">
        <WindowTree />
        <Editor />
        <PictureLibrary />
      </div>
      <StatusBar />

      <SettingsDialog />
      <div className="absolute left-[190px] top-[27px] w-[77px] h-[36px] border-2 border-[#ed1c24] pointer-events-none" />
      <div className="absolute left-[124px] top-[57px] w-[76px] h-[83px] border-2 border-[#ed1c24] pointer-events-none" />
      <NetMonitor />
      <div className="absolute right-[8px] bottom-[10px] text-[35px] leading-[40px] text-white/50 [text-shadow:1px_1px_1px_rgba(90,90,90,0.7)] pointer-events-none whitespace-nowrap">
        CSDN @XiuLian_ I
      </div>
    </div>
  )
}
